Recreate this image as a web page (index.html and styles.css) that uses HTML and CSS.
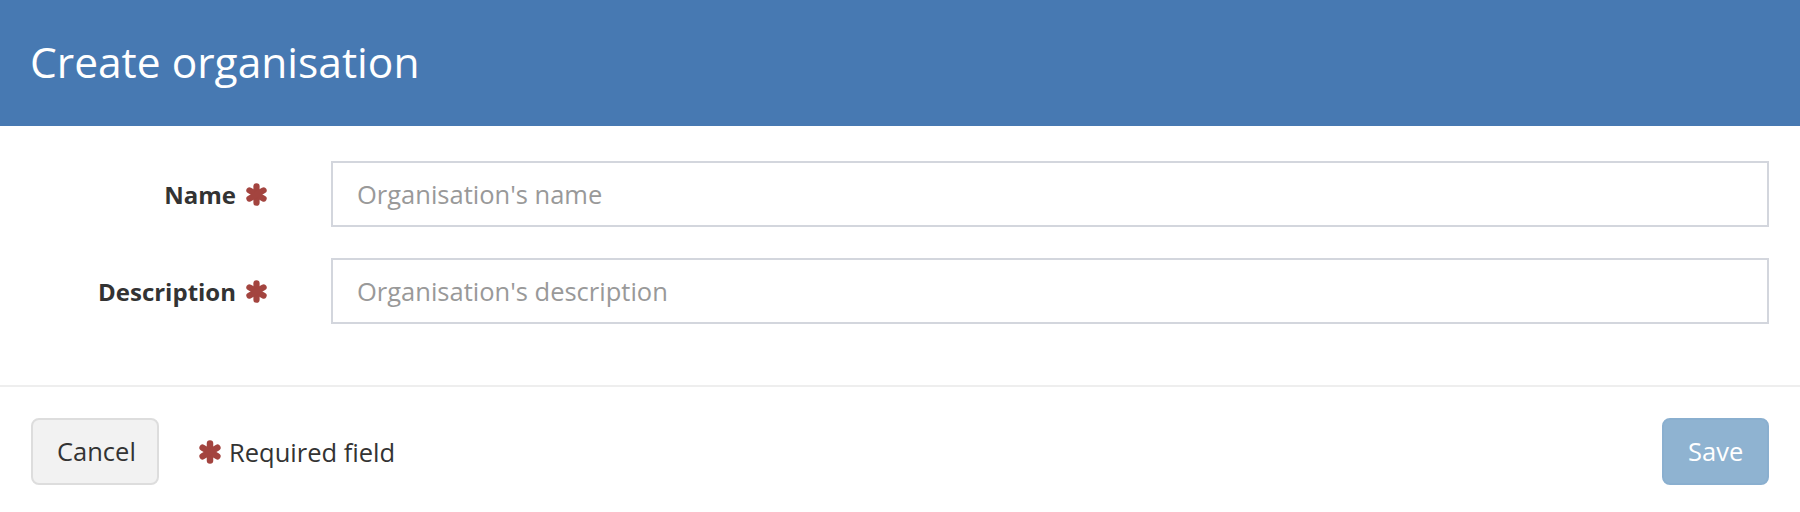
FILE: index.html
```html
<!DOCTYPE html>
<html lang="en">
<head>
<meta charset="utf-8">
<title>Create organisation</title>
<link rel="stylesheet" href="styles.css">
</head>
<body>
<div class="modal">
  <header class="modal-header">
    <h1 class="modal-title">Create organisation</h1>
  </header>
  <form class="modal-body">
    <div class="form-row">
      <label class="form-label" for="org-name">Name
        <svg class="req" viewBox="0 0 24 24" aria-hidden="true"><g stroke-linecap="round"><line x1="12" y1="3.5" x2="12" y2="20.5"/><line x1="4.64" y1="7.75" x2="19.36" y2="16.25"/><line x1="4.64" y1="16.25" x2="19.36" y2="7.75"/></g></svg>
      </label>
      <input class="form-input" id="org-name" type="text" placeholder="Organisation's name">
    </div>
    <div class="form-row">
      <label class="form-label" for="org-desc">Description
        <svg class="req" viewBox="0 0 24 24" aria-hidden="true"><g stroke-linecap="round"><line x1="12" y1="3.5" x2="12" y2="20.5"/><line x1="4.64" y1="7.75" x2="19.36" y2="16.25"/><line x1="4.64" y1="16.25" x2="19.36" y2="7.75"/></g></svg>
      </label>
      <input class="form-input" id="org-desc" type="text" placeholder="Organisation's description">
    </div>
  </form>
  <footer class="modal-footer">
    <div class="footer-left">
      <button class="btn btn-default" type="button">Cancel</button>
      <span class="req-note">
        <svg class="req" viewBox="0 0 24 24" aria-hidden="true"><g stroke-linecap="round"><line x1="12" y1="3.5" x2="12" y2="20.5"/><line x1="4.64" y1="7.75" x2="19.36" y2="16.25"/><line x1="4.64" y1="16.25" x2="19.36" y2="7.75"/></g></svg>
        Required field
      </span>
    </div>
    <button class="btn btn-primary" type="button" disabled>Save</button>
  </footer>
</div>
</body>
</html>
```

FILE: styles.css
```css
* { box-sizing: border-box; }

html, body {
  margin: 0;
  padding: 0;
  background: #ffffff;
}

body {
  font-family: "Open Sans", "Noto Sans", "Liberation Sans", sans-serif;
  font-size: 25.5px;
  color: #333333;
}

.modal-header {
  height: 126px;
  background: #4779b2;
  display: flex;
  align-items: center;
  padding: 0 30px;
}

.modal-title {
  margin: 0;
  font-size: 42.5px;
  font-weight: 400;
  color: #ffffff;
  line-height: 1;
  padding-bottom: 2px;
}

.modal-body {
  padding: 35px 31px 61px 0;
  display: flex;
  flex-direction: column;
  gap: 31px;
  border-bottom: 2px solid #eeeeee;
}

.form-row {
  display: grid;
  grid-template-columns: 268px 1fr;
  column-gap: 63px;
  align-items: center;
}

.form-label {
  display: flex;
  align-items: center;
  justify-content: flex-end;
  gap: 9px;
  font-weight: 700;
  font-size: 24px;
  color: #333333;
}

.req {
  width: 23px;
  height: 23px;
  stroke: #a3443f;
  stroke-width: 6.5;
  flex: none;
}

.form-input {
  height: 66px;
  width: 100%;
  border: 2px solid #d3d6dd;
  border-radius: 0;
  padding: 0 24px;
  font-family: inherit;
  font-size: 25.5px;
  color: #333333;
  background: #ffffff;
  outline: none;
}

.form-input::placeholder {
  color: #999999;
  opacity: 1;
}

.modal-footer {
  display: flex;
  align-items: center;
  justify-content: space-between;
  padding: 31px 31px 0 31px;
}

.footer-left {
  display: flex;
  align-items: center;
  gap: 39px;
}

.btn {
  height: 67px;
  border-radius: 8px;
  font-family: inherit;
  font-size: 25.5px;
  padding: 0 24px;
  line-height: 1;
}

.btn-default {
  width: 128px;
  background: #f2f2f2;
  border: 2px solid #dddddd;
  color: #333333;
}

.btn-primary {
  width: 107px;
  background: #8fb3d1;
  border: 2px solid #8aafcf;
  color: #ffffff;
}

.req-note {
  display: flex;
  align-items: center;
  gap: 7px;
  font-size: 25.5px;
  color: #333333;
}

.req-note .req {
  width: 24px;
  height: 24px;
}
```
